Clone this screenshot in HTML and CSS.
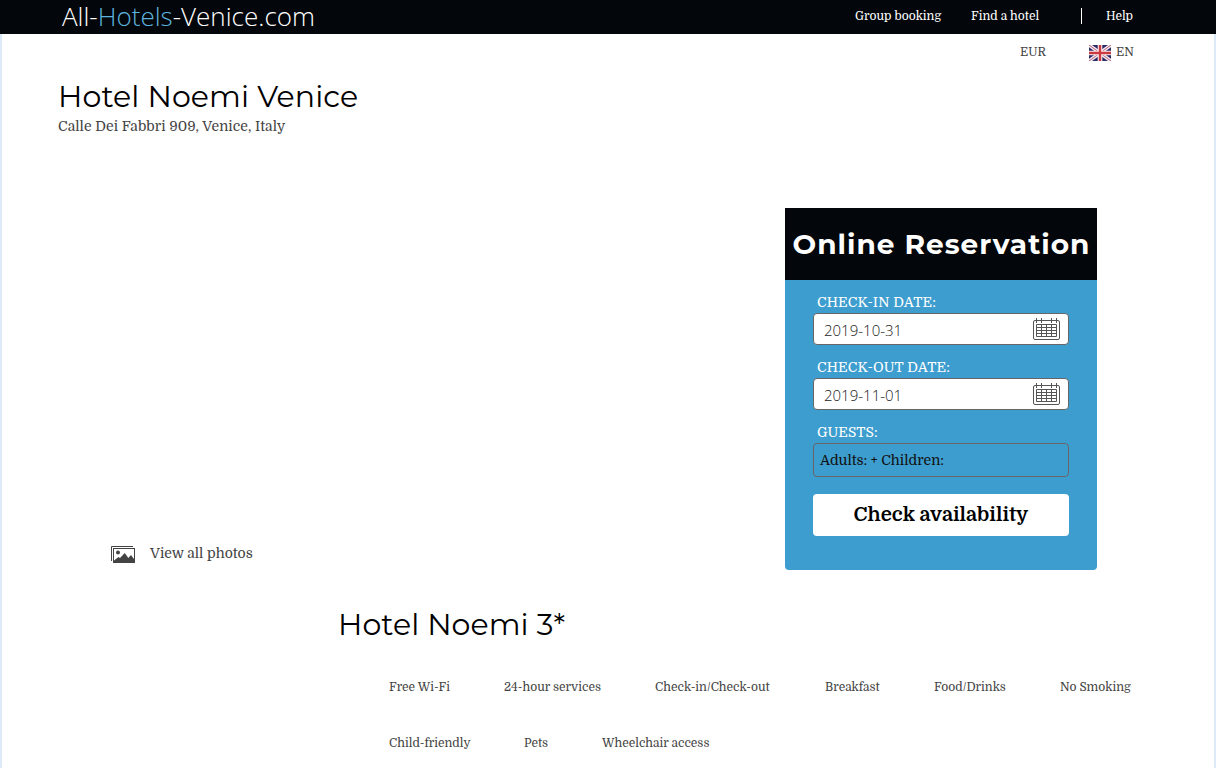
FILE: index.html
```html
<!DOCTYPE html>
<html lang="en">
<head>
    <meta charset="UTF-8">
    <meta name="viewport" content="width=device-width, initial-scale=1.0">
    <title>Hotel Noemi Venice</title>
    <link rel="stylesheet" href="styles.css">
</head>
<body>
<header class="header">
    <a href="#" class="logo">All-<span>Hotels</span>-Venice.com</a>
    <nav class="top-menu">
        <a href="#" class="group">Group booking</a>
        <a href="#" class="find">Find a hotel</a>
        <a href="#" class="help">Help</a>
    </nav>
</header>

<div class="wrapper">
    <div class="settings">
        <a href="#" class="currency">EUR</a>
        <a href="#" class="language">
            <svg class="flag" viewBox="0 0 22 16" width="22" height="16">
                <rect width="22" height="16" fill="#2c2864"/>
                <path d="M0 0L22 16M22 0L0 16" stroke="#eee6f0" stroke-width="3.6"/>
                <path d="M0 0L22 16M22 0L0 16" stroke="#c0667c" stroke-width="1"/>
                <path d="M11 0V16M0 8H22" stroke="#fbeef0" stroke-width="4.6"/>
                <path d="M11 0V16M0 8H22" stroke="#cc3a40" stroke-width="2.4"/>
            </svg>
            <span>EN</span>
        </a>
    </div>

    <div class="title">
        <h1>Hotel Noemi Venice</h1>
        <p>Calle Dei Fabbri 909, Venice, Italy</p>
    </div>

    <div class="main">
        <a href="#" class="photos">
            <svg viewBox="0 0 24 17" width="24" height="17">
                <path d="M.5 15V.5H22" fill="none" stroke="#444"/>
                <rect x="2.5" y="2.5" width="21" height="14" fill="#fff" stroke="#444"/>
                <circle cx="7" cy="6.5" r="2" fill="#444"/>
                <path d="M3 16V14.5L7.5 11L9 12L13.8 7L17.3 12L20 9L23 13V16Z" fill="#444"/>
            </svg>
            <span>View all photos</span>
        </a>

        <form class="reservation">
            <h2>Online Reservation</h2>
            <div class="fields">
                <label class="label-in">Check-in date:</label>
                <div class="date">
                    <span>2019-10-31</span>
                    <svg viewBox="0 0 28 23" width="28" height="23" fill="none" stroke="#555">
                        <rect x=".5" y="3.5" width="26" height="19" rx="1.5"/>
                        <path d="M3.5 1V6M8.5 1V6M18.5 1V6M23.5 1V6"/>
                        <path d="M3.5 7.5H23.5V19.5H3.5ZM3.5 10.5H23.5M3.5 13.5H23.5M3.5 16.5H23.5M8.5 7.5V19.5M13.5 7.5V19.5M18.5 7.5V19.5"/>
                    </svg>
                </div>
                <label class="label-out">Check-out date:</label>
                <div class="date">
                    <span>2019-11-01</span>
                    <svg viewBox="0 0 28 23" width="28" height="23" fill="none" stroke="#555">
                        <rect x=".5" y="3.5" width="26" height="19" rx="1.5"/>
                        <path d="M3.5 1V6M8.5 1V6M18.5 1V6M23.5 1V6"/>
                        <path d="M3.5 7.5H23.5V19.5H3.5ZM3.5 10.5H23.5M3.5 13.5H23.5M3.5 16.5H23.5M8.5 7.5V19.5M13.5 7.5V19.5M18.5 7.5V19.5"/>
                    </svg>
                </div>
                <label class="label-guests">Guests:</label>
                <div class="guests">Adults: + Children:</div>
                <button type="button" class="check-button">Check availability</button>
            </div>
        </form>
    </div>

    <div class="about">
        <h2>Hotel Noemi 3*</h2>
        <div class="features first">
            <span>Free Wi-Fi</span>
            <span>24-hour services</span>
            <span>Check-in/Check-out</span>
            <span>Breakfast</span>
            <span>Food/Drinks</span>
            <span>No Smoking</span>
        </div>
        <div class="features second">
            <span>Child-friendly</span>
            <span>Pets</span>
            <span>Wheelchair access</span>
        </div>
    </div>
</div>
</body>
</html>
```
FILE: styles.css
```css
* {
    box-sizing: border-box;
}

body {
    margin: 0;
    height: 768px;
    overflow: hidden;
    background-color: #fff;
    color: #444;
    font-family: Domine, "Noto Serif", "DejaVu Serif Condensed", "DejaVu Serif", serif;
    font-size: 12px;
}

a {
    color: inherit;
    text-decoration: none;
}

h1, h2, p {
    margin: 0;
    white-space: nowrap;
}

.header {
    display: flex;
    justify-content: space-between;
    height: 34px;
    padding-left: 62px;
    background-color: #03060b;
    color: #fff;
}

.logo {
    font-family: "Open Sans", sans-serif;
    font-size: 26px;
    font-weight: 300;
    line-height: 32px;
    white-space: nowrap;
}

.logo span {
    color: #5eb3dc;
}

.top-menu {
    display: flex;
    width: 361px;
    padding-top: 8px;
    line-height: 16px;
    white-space: nowrap;
}

.group {
    width: 116px;
}

.find {
    width: 110px;
}

.help {
    padding-left: 24px;
    border-left: 1px solid #fff;
    height: 16px;
}

.wrapper {
    height: 734px;
    border-left: 2px solid #dce9f7;
    border-right: 2px solid #dce9f7;
}

.settings {
    display: flex;
    height: 41px;
    padding: 9px 0 0 1018px;
    line-height: 18px;
}

.currency {
    width: 69px;
}

.language {
    display: flex;
}

.flag {
    margin: 2px 5px 0 0;
}

.title {
    height: 133px;
    padding-left: 56px;
}

.title h1,
.about h2 {
    color: #000;
    font-family: Montserrat, Inter, sans-serif;
    font-size: 30px;
    font-weight: 400;
    line-height: 44px;
}

.title h1 {
    height: 43px;
    letter-spacing: 0.1px;
}

.title p {
    font-size: 14px;
    letter-spacing: 0.05px;
    line-height: 16px;
}

.main {
    display: flex;
    justify-content: space-between;
    align-items: flex-end;
    height: 362px;
    padding: 0 117px 0 109px;
}

.photos {
    display: flex;
    gap: 15px;
    padding-bottom: 7px;
    font-size: 14px;
    line-height: 20px;
}

.photos span {
    margin-top: -3px;
}

.reservation {
    width: 312px;
    height: 362px;
    border-radius: 0 0 4px 4px;
    background-color: #3d9dce;
}

.reservation h2 {
    height: 72px;
    padding-left: 1px;
    background-color: #03060b;
    color: #fff;
    font-family: Montserrat, Inter, sans-serif;
    font-size: 28px;
    font-weight: 700;
    letter-spacing: 1px;
    line-height: 72px;
    text-align: center;
}

.fields {
    display: flex;
    flex-direction: column;
    padding: 12px 28px 0;
}

.fields label {
    height: 21px;
    padding-left: 4px;
    color: #fff;
    font-size: 14px;
    letter-spacing: 0.12px;
    line-height: 20px;
    text-transform: uppercase;
}

.fields .label-guests {
    letter-spacing: 0;
}

.date {
    display: flex;
    justify-content: space-between;
    height: 32px;
    margin-bottom: 12px;
    padding: 3px 7px 0 10px;
    border: 1px solid #666;
    border-radius: 4px;
    background-color: #fff;
    color: #222;
    font-family: "Open Sans", sans-serif;
    font-size: 15px;
    font-weight: 300;
    line-height: 27px;
}

.guests {
    height: 34px;
    padding-left: 6px;
    border: 1px solid #666;
    border-radius: 4px;
    color: #111;
    font-size: 14px;
    line-height: 32px;
}

.check-button {
    height: 42px;
    margin-top: 17px;
    padding: 0;
    border: 0;
    border-radius: 4px;
    background-color: #fff;
    color: #000;
    font-family: inherit;
    font-size: 20px;
    font-weight: 700;
    line-height: 40px;
}

.about {
    padding: 33px 0 0 336px;
}

.about h2 {
    margin-bottom: 32px;
    letter-spacing: 0.05px;
}

.features {
    display: grid;
    height: 56px;
    padding-left: 51px;
    line-height: 16px;
    white-space: nowrap;
}

.first {
    grid-template-columns: 115px 151px 170px 109px 126px 80px;
}

.second {
    grid-template-columns: 135px 78px 120px;
}
```
